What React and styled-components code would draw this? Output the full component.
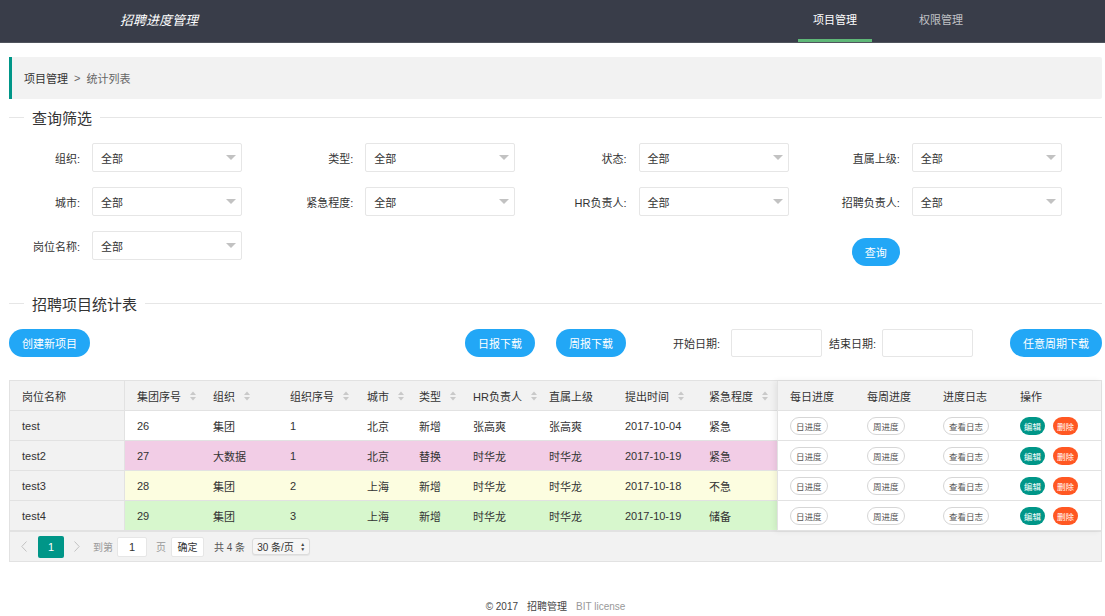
import React from "react";
import styled, { createGlobalStyle } from "styled-components";

const GlobalStyle = createGlobalStyle`
  * {
    box-sizing: border-box;
  }
  body {
    margin: 0;
    background: #fff;
    color: #333;
    font-family: "Liberation Sans", "Noto Sans CJK SC", sans-serif;
    font-size: 11px;
  }
`;

const filters = [
  ["组织", "类型", "状态", "直属上级"],
  ["城市", "紧急程度", "HR负责人", "招聘负责人"],
  ["岗位名称"]
];

const mainCols = [
  { title: "集团序号", width: 76, sort: true },
  { title: "组织", width: 77, sort: true },
  { title: "组织序号", width: 77, sort: true },
  { title: "城市", width: 52, sort: true },
  { title: "类型", width: 54, sort: true },
  { title: "HR负责人", width: 76, sort: true },
  { title: "直属上级", width: 76 },
  { title: "提出时间", width: 84, sort: true },
  { title: "紧急程度", width: 80, sort: true }
];
const mainTemplate = mainCols.map(c => `${c.width}px`).join(" ");
const rightTemplate = "77px 76px 77px 93px";

const rows = [
  { name: "test", bg: "#ffffff", cells: ["26", "集团", "1", "北京", "新增", "张高爽", "张高爽", "2017-10-04", "紧急"] },
  { name: "test2", bg: "#f2cde6", cells: ["27", "大数据", "1", "北京", "替换", "时华龙", "时华龙", "2017-10-19", "紧急"] },
  { name: "test3", bg: "#fcfde0", cells: ["28", "集团", "2", "上海", "新增", "时华龙", "时华龙", "2017-10-18", "不急"] },
  { name: "test4", bg: "#d7f7cd", cells: ["29", "集团", "3", "上海", "新增", "时华龙", "时华龙", "2017-10-19", "储备"] }
];

const SortIcon = () => (
  <svg width="6" height="10" viewBox="0 0 6 10">
    <path d="M3 0.5 L6 4 H0 Z" fill="#c9c9c9" />
    <path d="M0 6 H6 L3 9.5 Z" fill="#c9c9c9" />
  </svg>
);

const Chevron = ({ dir }) => (
  <svg width="6" height="11" viewBox="0 0 6 11">
    <path
      d={dir === "left" ? "M5.5 0.5 L0.8 5.5 L5.5 10.5" : "M0.5 0.5 L5.2 5.5 L0.5 10.5"}
      fill="none"
      stroke="#c2c2c2"
      strokeWidth="1"
    />
  </svg>
);

const App = () => {
  return (
    <>
      <GlobalStyle />
      <Header>
        <Brand>招聘进度管理</Brand>
        <Nav>
          <NavItem $active>项目管理</NavItem>
          <NavItem>权限管理</NavItem>
        </Nav>
      </Header>

      <Main>
        <Crumbs>
          <CrumbLink>项目管理</CrumbLink>
          <CrumbSep>&gt;</CrumbSep>
          <CrumbCurrent>统计列表</CrumbCurrent>
        </Crumbs>

        <Legend $top={8}>
          <LegendText>查询筛选</LegendText>
        </Legend>

        <FilterGrid>
          {filters.map(row =>
            row.map(label => (
              <Field key={label}>
                <FieldLabel>{label}:</FieldLabel>
                <Select>
                  <span>全部</span>
                  <Caret />
                </Select>
              </Field>
            ))
          )}
          <QueryCell>
            <PillButton>查询</PillButton>
          </QueryCell>
        </FilterGrid>

        <Legend $top={27}>
          <LegendText>招聘项目统计表</LegendText>
        </Legend>

        <Toolbar>
          <PillButton>创建新项目</PillButton>
          <ToolGroup>
            <PillButton>日报下载</PillButton>
            <PillButton $ml={21}>周报下载</PillButton>
            <DateLabel $ml={47}>开始日期:</DateLabel>
            <DateInput $ml={11} />
            <DateLabel $ml={7}>结束日期:</DateLabel>
            <DateInput $ml={6} />
          </ToolGroup>
          <PillButton $ml="auto">任意周期下载</PillButton>
        </Toolbar>

        <TableFrame>
          <TableBody>
            <FixedLeft>
              <HeadRow $cols="1fr">
                <Cell>岗位名称</Cell>
              </HeadRow>
              {rows.map(r => (
                <Row key={r.name} $cols="1fr">
                  <Cell>{r.name}</Cell>
                </Row>
              ))}
            </FixedLeft>

            <Scroller>
              <HeadRow $cols={mainTemplate}>
                {mainCols.map(c => (
                  <Cell key={c.title}>
                    {c.title}
                    {c.sort && (
                      <SortSlot>
                        <SortIcon />
                      </SortSlot>
                    )}
                  </Cell>
                ))}
              </HeadRow>
              {rows.map(r => (
                <Row key={r.name} $cols={mainTemplate} $bg={r.bg}>
                  {r.cells.map((v, i) => (
                    <Cell key={i}>{v}</Cell>
                  ))}
                </Row>
              ))}
            </Scroller>

            <FixedRight>
              <HeadRow $cols={rightTemplate}>
                <Cell>每日进度</Cell>
                <Cell>每周进度</Cell>
                <Cell>进度日志</Cell>
                <Cell>操作</Cell>
              </HeadRow>
              {rows.map(r => (
                <Row key={r.name} $cols={rightTemplate} $bg="#fff">
                  <Cell>
                    <GhostButton>日进度</GhostButton>
                  </Cell>
                  <Cell>
                    <GhostButton>周进度</GhostButton>
                  </Cell>
                  <Cell>
                    <GhostButton>查看日志</GhostButton>
                  </Cell>
                  <Cell>
                    <SmallButton $color="#009688">编辑</SmallButton>
                    <SmallButton $color="#ff5722" $ml={8}>删除</SmallButton>
                  </Cell>
                </Row>
              ))}
            </FixedRight>
          </TableBody>

          <Pager>
            <Chevron dir="left" />
            <PageCurrent>1</PageCurrent>
            <PagerGap $ml={10}>
              <Chevron dir="right" />
            </PagerGap>
            <PagerText $ml={13}>到第</PagerText>
            <PageInput $ml={4}>1</PageInput>
            <PagerText $ml={9}>页</PagerText>
            <PageConfirm>确定</PageConfirm>
            <PagerText $ml={10} $color="#555">共 4 条</PagerText>
            <PageSize>
              30 条/页
              <SizeArrows>
                <span>▲</span>
                <span>▼</span>
              </SizeArrows>
            </PageSize>
          </Pager>
        </TableFrame>

        <Footer>
          <span>© 2017</span>
          <span>招聘管理</span>
          <FooterMuted>BIT license</FooterMuted>
        </Footer>
      </Main>
    </>
  );
};

export default App;

const Header = styled.header`
  display: flex;
  height: 43px;
  background: #393d49;
  border-bottom: 1px solid #50545d;
`;

const Brand = styled.div`
  padding-left: 120px;
  line-height: 41px;
  color: #fff;
  font-size: 13px;
  font-style: italic;
`;

const Nav = styled.nav`
  display: flex;
  gap: 32px;
  margin-left: auto;
  padding-right: 127px;
`;

const NavItem = styled.a`
  display: block;
  height: 42px;
  padding: 0 15px;
  line-height: 40px;
  font-size: 11px;
  color: ${p => (p.$active ? "#fff" : "rgba(255, 255, 255, 0.7)")};
  border-bottom: 3px solid ${p => (p.$active ? "#5fb878" : "transparent")};
`;

const Main = styled.main`
  padding: 14px 3px 0 9px;
`;

const Crumbs = styled.div`
  display: flex;
  align-items: center;
  height: 42px;
  padding-left: 12px;
  background: #f2f2f2;
  border-left: 3px solid #009688;
  border-radius: 0 2px 2px 0;
`;

const CrumbLink = styled.span`
  color: #333;
`;

const CrumbSep = styled.span`
  margin: 0 6px;
  color: #666;
`;

const CrumbCurrent = styled.span`
  color: #666;
`;

const Legend = styled.div`
  display: flex;
  align-items: center;
  height: 20px;
  margin-top: ${p => p.$top}px;

  &::before,
  &::after {
    content: "";
    height: 1px;
    background: #e6e6e6;
  }
  &::before {
    width: 15px;
  }
  &::after {
    flex: 1;
  }
`;

const LegendText = styled.span`
  padding: 0 8px;
  font-size: 15px;
  color: #333;
`;

const FilterGrid = styled.div`
  display: grid;
  grid-template-columns: repeat(4, 1fr);
  align-items: start;
  row-gap: 15px;
  margin-top: 16px;
`;

const Field = styled.div`
  display: flex;
  align-items: center;
`;

const FieldLabel = styled.label`
  width: 83px;
  padding-right: 12px;
  text-align: right;
  white-space: nowrap;
`;

const Select = styled.div`
  display: flex;
  align-items: center;
  justify-content: space-between;
  width: 150px;
  height: 29px;
  padding: 0 5px 0 8px;
  background: #fff;
  border: 1px solid #e6e6e6;
  border-radius: 2px;
`;

const Caret = styled.i`
  width: 0;
  height: 0;
  border-top: 5px solid #c2c2c2;
  border-left: 5px solid transparent;
  border-right: 5px solid transparent;
`;

const QueryCell = styled.div`
  grid-column: 4;
  padding: 7px 0 0 23px;
`;

const PillButton = styled.button`
  height: 28px;
  margin-left: ${p => (p.$ml === "auto" ? "auto" : `${p.$ml || 0}px`)};
  padding: 0 13px;
  background: #22a7f6;
  border: none;
  border-radius: 14px;
  color: #fff;
  font-family: inherit;
  font-size: 11px;
  white-space: nowrap;
`;

const Toolbar = styled.div`
  display: flex;
  align-items: center;
  margin-top: 16px;
`;

const ToolGroup = styled.div`
  display: flex;
  align-items: center;
  margin-left: 375px;
`;

const DateLabel = styled.span`
  margin-left: ${p => p.$ml}px;
  white-space: nowrap;
`;

const DateInput = styled.div`
  width: 91px;
  height: 28px;
  margin-left: ${p => p.$ml}px;
  background: #fff;
  border: 1px solid #e6e6e6;
  border-radius: 2px;
`;

const TableFrame = styled.div`
  margin-top: 23px;
  background: #f2f2f2;
  border: 1px solid #e2e2e2;
`;

const TableBody = styled.div`
  display: flex;
`;

const FixedLeft = styled.div`
  width: 115px;
  background: #f2f2f2;
  border-right: 1px solid #e2e2e2;
`;

const Scroller = styled.div`
  flex: 1;
  background: #fff;
`;

const FixedRight = styled.div`
  width: 324px;
  background: #fff;
  border-left: 1px solid #e2e2e2;
  box-shadow: -2px 0 6px rgba(0, 0, 0, 0.07);
  position: relative;
`;

const Row = styled.div`
  display: grid;
  grid-template-columns: ${p => p.$cols};
  height: 30px;
  background: ${p => p.$bg || "transparent"};
  border-bottom: 1px solid #e2e2e2;
`;

const HeadRow = styled(Row)`
  height: 30px;
  background: #f2f2f2;
`;

const Cell = styled.div`
  display: flex;
  align-items: center;
  padding: 0 12px;
  white-space: nowrap;
  color: #333;
`;

const SortSlot = styled.span`
  display: inline-flex;
  margin-left: 9px;
`;

const GhostButton = styled.span`
  display: inline-flex;
  align-items: center;
  height: 18px;
  padding: 0 5px;
  background: #fff;
  border: 1px solid #d6d6d6;
  border-radius: 9px;
  color: #555;
  font-size: 8.5px;
`;

const SmallButton = styled.span`
  display: inline-flex;
  align-items: center;
  height: 18px;
  margin-left: ${p => p.$ml || 0}px;
  padding: 0 4px;
  background: ${p => p.$color};
  border-radius: 9px;
  color: #fff;
  font-size: 8.5px;
`;

const Pager = styled.div`
  display: flex;
  align-items: center;
  height: 30px;
  padding-left: 11px;
  border-top: 1px solid #e2e2e2;
`;

const PageCurrent = styled.span`
  display: flex;
  align-items: center;
  justify-content: center;
  width: 26px;
  height: 22px;
  margin-left: 11px;
  background: #009688;
  border-radius: 2px;
  color: #fff;
`;

const PagerGap = styled.span`
  display: inline-flex;
  margin-left: ${p => p.$ml}px;
`;

const PagerText = styled.span`
  margin-left: ${p => p.$ml}px;
  color: ${p => p.$color || "#999"};
  font-size: 10px;
  white-space: nowrap;
`;

const PageInput = styled.span`
  display: flex;
  align-items: center;
  justify-content: center;
  width: 30px;
  height: 20px;
  margin-left: ${p => p.$ml}px;
  background: #fff;
  border: 1px solid #e6e6e6;
  border-radius: 2px;
  color: #333;
`;

const PageConfirm = styled.span`
  display: flex;
  align-items: center;
  justify-content: center;
  width: 33px;
  height: 20px;
  margin-left: 5px;
  background: #fff;
  border: 1px solid #e6e6e6;
  border-radius: 2px;
  font-size: 10px;
`;

const PageSize = styled.span`
  display: flex;
  align-items: center;
  justify-content: space-between;
  width: 58px;
  height: 17px;
  margin-left: 7px;
  padding: 0 4px;
  background: #f6f6f6;
  border: 1px solid #dcdcdc;
  border-radius: 3px;
  box-shadow: 0 1px 1px rgba(0, 0, 0, 0.06);
  font-size: 10px;
  color: #333;
`;

const SizeArrows = styled.span`
  display: flex;
  flex-direction: column;
  font-size: 5px;
  line-height: 5px;
  color: #444;
`;

const Footer = styled.footer`
  display: flex;
  justify-content: center;
  align-items: baseline;
  gap: 9px;
  margin-top: 36px;
  font-size: 10px;
  color: #444;
`;

const FooterMuted = styled.span`
  color: #999;
`;
